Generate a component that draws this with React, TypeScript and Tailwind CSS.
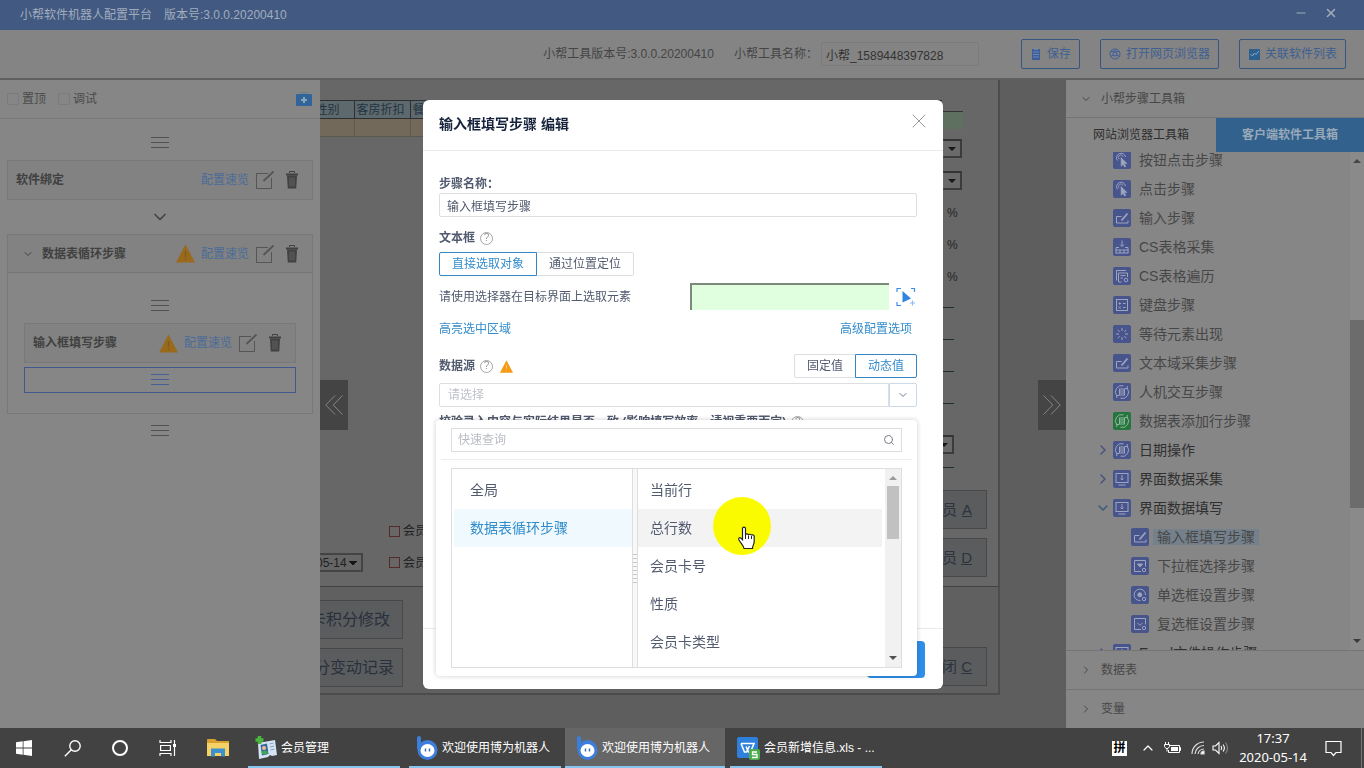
import React from "react";
import { ChevronDown, ChevronRight, ChevronUp, Minus, X, Search } from "lucide-react";

const sans = "font-['Liberation_Sans','Noto_Sans_CJK_SC',sans-serif]";

type Glyph =
  | "click" | "edit" | "collect" | "loop" | "keys" | "wait"
  | "cycle" | "screen" | "drop" | "radio" | "check";

function ToolGlyph({ kind }: { kind: Glyph }) {
  switch (kind) {
    case "click":
      return (
        <>
          <path d="M4.5 9.5A4.5 4.5 0 1 1 12.5 6M6.5 8.2A2.3 2.3 0 1 1 10 5.6" />
          <path d="M8 6.5l6 6-2.600.3 1.500 2.600-1.300.7-1.500-2.600-2 1.800z" fill="currentColor" strokeWidth="0.500" />
        </>
      );
    case "edit":
      return (
        <>
          <path d="M8.500 7.500H3.500V14H15V11.500" />
          <path d="M8.500 11.500L14.500 4.500" strokeWidth="1.800" />
        </>
      );
    case "collect":
      return <path d="M9 2.500v6M7 6.500l2 2 2-2M3 9.500h3M12 9.500h3M2.500 12h13M2.500 15h13M3 9.500V15M15 9.500V15M7 12v3M11 12v3" />;
    case "loop":
      return (
        <>
          <path d="M3.500 13.500V3.500H13M8.500 15H5.500V6H14.500V10M7.500 8.500h5M7.500 11h2.500" />
          <circle cx="13" cy="13" r="1.800" />
        </>
      );
    case "keys":
      return (
        <>
          <rect x="3.500" y="3.500" width="11" height="11" />
          <path d="M5.500 7.500h2.500M6.700 6.300v2.500M10 7.500h2.500M5.700 10.500l2 2M7.700 10.500l-2 2M10 11.500h2.500" />
        </>
      );
    case "wait":
      return <path d="M9 3v3M13.200 4.800l-1.800 2M15 9h-3M13.200 13.200l-1.800-2M9 15v-3M4.800 13.200l1.800-2M3 9h3M4.800 4.800l1.800 2" />;
    case "cycle":
      return (
        <>
          <path d="M10.500 2.800A6.300 6.300 0 0 0 4 13M7.500 15.200A6.300 6.300 0 0 0 14 5M12 5.500h2.200V3M6 12.500H3.800V15" />
          <rect x="6.500" y="6" width="5" height="6" />
          <path d="M6.500 8h5M6.500 10h5" />
        </>
      );
    case "screen":
      return (
        <>
          <rect x="3" y="3.500" width="12" height="9" />
          <path d="M9 5v5M7.500 8.500L9 10l1.500-1.500M5.500 15h7" />
        </>
      );
    case "drop":
      return (
        <>
          <path d="M10 14.500H3.500V3.500H14.500V9.500" />
          <path d="M6.500 7h5L9 10z" fill="currentColor" />
          <circle cx="13" cy="13" r="1.700" />
        </>
      );
    case "radio":
      return (
        <>
          <path d="M9.500 14.500A5.700 5.700 0 1 1 14.500 9" />
          <circle cx="8.800" cy="8.800" r="2" fill="currentColor" />
          <circle cx="13" cy="13" r="1.700" />
        </>
      );
    default:
      return (
        <>
          <path d="M10 14.500H3.500V3.500H14.500V9.500M6.500 8l2.300 2.300L11.500 8" />
          <circle cx="13" cy="13" r="1.700" />
        </>
      );
  }
}

function ToolIcon({ kind, green }: { kind: Glyph; green?: boolean }) {
  return (
    <span className={`block size-[18px] shrink-0 rounded-xs ${green ? "bg-[#24763e] text-[#93b79d]" : "bg-[#48548c] text-[#9da4bd]"}`}>
      <svg viewBox="0 0 18 18" className="size-[18px]" fill="none" stroke="currentColor" strokeWidth="1">
        <ToolGlyph kind={kind} />
      </svg>
    </span>
  );
}

function Bars({ blue }: { blue?: boolean }) {
  return (
    <svg viewBox="0 0 18 12" className={`h-3 w-[18px] ${blue ? "text-[#44619a]" : "text-[#515151]"}`} stroke="currentColor">
      <path d="M0 .5h18M0 5.500h18M0 10.500h18" />
    </svg>
  );
}

function Warning({ bright, small }: { bright?: boolean; small?: boolean }) {
  return (
    <svg viewBox="0 0 19 19" className={small ? "size-[13px]" : "size-[19px]"}>
      <path d="M9.500.5L19 18.500H0z" fill={bright ? "#f59a12" : "#99691c"} />
      <path d="M9.500 7v6M9.500 14.500v1.500" stroke={bright ? "#ffc773" : "#7d5a22"} strokeWidth="1.300" />
    </svg>
  );
}

function StepActions({ warn }: { warn?: boolean }) {
  return (
    <div className="flex items-center gap-[6px]">
      {warn && <Warning />}
      <a href="#preview" className="text-[#4b6c98]">配置速览</a>
      <button aria-label="编辑" className="text-[#555]">
        <svg viewBox="0 0 20 20" className="size-5" fill="none" stroke="currentColor">
          <path d="M13 3.500H1.500V18.500H16.500V8" />
          <path d="M8.500 11L18.500 1.500" strokeWidth="1.800" />
        </svg>
      </button>
      <button aria-label="删除" className="ml-1 text-[#414141]">
        <svg viewBox="0 0 14 20" className="h-5 w-[14px]" fill="none" stroke="currentColor">
          <path d="M4.500 3V1.500h5V3" />
          <path d="M1 3.500h12v2H1z" fill="currentColor" stroke="none" />
          <path d="M2 5.500h10l-.8 13H2.800z" fill="currentColor" stroke="none" />
          <path d="M5 7.500v9M7 7.500v9M9 7.500v9" stroke="#6d6d6d" strokeWidth="0.800" />
        </svg>
      </button>
    </div>
  );
}

function StepPanel() {
  return (
    <aside className="flex w-80 shrink-0 flex-col bg-[#868686] text-[#404040]">
      <div className="flex h-[39px] items-center border-b border-[#787878] pr-2 pl-[7px]">
        <label className="flex items-center gap-[3px] text-[#4b4b4b]">
          <input type="checkbox" className="size-3 appearance-none rounded-xs border border-[#7b7b7b]" />
          置顶
        </label>
        <label className="ml-3 flex items-center gap-[3px] text-[#4b4b4b]">
          <input type="checkbox" className="size-3 appearance-none rounded-xs border border-[#7b7b7b]" />
          调试
        </label>
        <button aria-label="工具箱" className="ml-auto">
          <svg viewBox="0 0 16 16" className="size-4">
            <path d="M5 3V1.500h6V3" fill="none" stroke="#6c7c8c" />
            <rect x="0" y="3" width="16" height="12" rx="1" fill="#31659a" />
            <path d="M8 6v6M5 9h6" stroke="#8fa3b7" strokeWidth="2" />
          </svg>
        </button>
      </div>
      <div className="flex flex-col items-center px-[7px] pt-[18px]">
        <Bars />
        <section className="mt-[11px] flex h-10 w-full items-center justify-between border border-[#787878] bg-[#828282] pr-[13px] pl-2">
          <h3 className="font-bold">软件绑定</h3>
          <StepActions />
        </section>
        <ChevronDown className="mt-[7px] size-5 text-[#444]" strokeWidth={2} />
        <section className="mt-[7px] w-full border border-[#787878]">
          <div className="flex h-[38px] items-center justify-between border-b border-[#757575] bg-[#828282] pr-[13px] pl-[14px]">
            <h3 className="flex items-center gap-2 font-bold">
              <ChevronDown className="size-3" />
              数据表循环步骤
            </h3>
            <StepActions warn />
          </div>
          <div className="flex flex-col items-center px-4 pt-[27px] pb-5">
            <Bars />
            <div className="mt-[11px] flex h-10 w-full items-center justify-between border border-[#797979] bg-[#828282] pr-[13px] pl-2">
              <h3 className="font-bold">输入框填写步骤</h3>
              <StepActions warn />
            </div>
            <div className="mt-1 flex h-[26px] w-full items-center justify-center border border-[#3f5a8a]">
              <Bars blue />
            </div>
          </div>
        </section>
        <div className="mt-[11px]">
          <Bars />
        </div>
      </div>
    </aside>
  );
}

function OldSelect() {
  return (
    <button aria-label="展开" className="flex h-[19px] w-5 items-center justify-center border-2 border-t-[#333] border-r-[#3c3c3c] border-b-[#3c3c3c] border-l-[#6e6e6e] bg-[#6a6a6a]">
      <span className="border-x-4 border-t-4 border-x-transparent border-t-[#161616]" />
    </button>
  );
}

function OldButton({ text, hotkey }: { text: string; hotkey: string }) {
  return (
    <button className="flex h-[39px] w-[45px] shrink-0 items-center justify-between overflow-hidden border border-l-0 border-[#484848] bg-[#5b5c5e] pr-[14px] text-[15px] text-[#2c3440]">
      <span>{text}</span>
      <span className="underline">{hotkey}</span>
    </button>
  );
}

function MemberApp() {
  return (
    <main className="relative flex min-w-0 flex-1 overflow-hidden bg-[#5e5e5e]">
      <div className="mr-[66px] mb-[33px] flex min-w-0 flex-1 flex-col border-r-2 border-b-2 border-[#4c4c4c] bg-[#676767]">
        <div className="flex min-h-0 flex-1">
          <div className="flex min-w-0 flex-1 flex-col pt-5">
            <table className="w-full table-fixed border-collapse text-left text-[#243344]">
              <thead>
                <tr className="h-[18px] border-y border-[#2c3034] bg-[#5d696c]">
                  <th className="w-[34px] border-r border-[#2c3034] p-0 font-normal">
                    <span className="flex justify-end overflow-hidden pr-[14px] leading-4 whitespace-nowrap">性别</span>
                  </th>
                  <th className="w-14 border-r border-[#2c3034] p-0 pl-[2px] font-normal leading-4 whitespace-nowrap">客房折扣</th>
                  <th className="p-0 pl-[2px] font-normal leading-4">餐饮折扣</th>
                </tr>
              </thead>
              <tbody>
                <tr className="h-[18px] border-b border-[#595950] bg-[#72695a]">
                  <td className="border-r border-[#5f5a50] p-0" />
                  <td className="border-r border-[#5f5a50] p-0" />
                  <td className="p-0" />
                </tr>
              </tbody>
            </table>
            <div className="mt-auto grid w-[180px] grid-cols-[69px_1fr] items-center gap-y-[14px] pb-[14px] text-[#202020]">
              <span />
              <label className="flex items-center gap-[3px]">
                <input type="checkbox" className="size-[11px] appearance-none border border-[#552a2a]" />
                会员
              </label>
              <select aria-label="日期" className="h-[19px] w-[43px] appearance-none border-2 border-l-0 border-[#444] bg-[#666] bg-[linear-gradient(45deg,transparent_50%,#161616_50%),linear-gradient(-45deg,transparent_50%,#161616_50%)] bg-[length:4px_4px] bg-[position:right_8px_center,right_4px_center] bg-no-repeat -indent-1 leading-none">
                <option>05-14</option>
              </select>
              <label className="flex items-center gap-[3px]">
                <input type="checkbox" className="size-[11px] appearance-none border border-[#552a2a]" />
                会员
              </label>
            </div>
          </div>
          <div className="flex w-14 flex-col pt-[31px]">
            <div className="h-[18px] w-[21px] border-t border-[#333] bg-[#5e7060]" />
            <div className="mt-[10px] flex flex-col gap-[13px]">
              <OldSelect />
              <OldSelect />
            </div>
            <div className="mt-[15px] flex flex-col gap-4 pl-[5px] leading-4 text-[#262626]">
              <span>%</span>
              <span>%</span>
              <span>%</span>
            </div>
            <div className="mt-[22px] flex w-3 flex-col gap-[31px]">
              <span className="h-px bg-[#1f3322]" />
              <span className="h-px bg-[#1f3322]" />
              <span className="h-px bg-[#1f3322]" />
              <span className="h-px bg-[#1f3322]" />
            </div>
            <div className="-ml-2 mt-[31px]">
              <OldSelect />
            </div>
            <span className="mt-[13px] h-px w-3 bg-[#1f3322]" />
            <div className="mt-auto mb-[9px] flex flex-col gap-[9px]">
              <OldButton text="员" hotkey="A" />
              <OldButton text="员" hotkey="D" />
            </div>
          </div>
        </div>
        <div className="flex h-[107px] shrink-0 justify-between border-t border-[#444] bg-[#606060] pt-[13px]">
          <div className="flex w-[83px] flex-col gap-[9px] text-base text-[#29313c]">
            <button className="flex h-[39px] shrink-0 items-center justify-end overflow-hidden border border-l-0 border-[#484848] bg-[#5b5c5e] pr-3 whitespace-nowrap">卡积分修改</button>
            <button className="flex h-[39px] shrink-0 items-center justify-end overflow-hidden border border-l-0 border-[#484848] bg-[#5b5c5e] pr-2 whitespace-nowrap">分变动记录</button>
          </div>
          <div className="flex w-14 flex-col justify-end pb-[7px]">
            <OldButton text="闭" hotkey="C" />
          </div>
        </div>
      </div>
      <button aria-label="收起左侧" className="absolute top-[300px] left-0 flex h-[50px] w-7 items-center justify-center bg-[#444] text-[#858585]">
        <svg viewBox="0 0 18 20" className="h-5 w-[18px]" fill="none" stroke="currentColor">
          <path d="M10 .5L.8 10 10 19.500M17.500.5L8.300 10l9.200 9.500" />
        </svg>
      </button>
      <button aria-label="收起右侧" className="absolute top-[300px] right-0 flex h-[50px] w-7 items-center justify-center bg-[#444] text-[#858585]">
        <svg viewBox="0 0 18 20" className="h-5 w-[18px]" fill="none" stroke="currentColor">
          <path d="M8 .5L17.200 10 8 19.500M.5.5L9.700 10 .5 19.500" />
        </svg>
      </button>
    </main>
  );
}

type Row = { text: string; icon: Glyph; green?: boolean; level?: "group" | "open" | "child"; active?: boolean };

const rows: Row[] = [
  { text: "按钮点击步骤", icon: "click" },
  { text: "点击步骤", icon: "click" },
  { text: "输入步骤", icon: "edit" },
  { text: "CS表格采集", icon: "collect" },
  { text: "CS表格遍历", icon: "loop" },
  { text: "键盘步骤", icon: "keys" },
  { text: "等待元素出现", icon: "wait" },
  { text: "文本域采集步骤", icon: "edit" },
  { text: "人机交互步骤", icon: "cycle" },
  { text: "数据表添加行步骤", icon: "cycle", green: true },
  { text: "日期操作", icon: "cycle", level: "group" },
  { text: "界面数据采集", icon: "screen", level: "group" },
  { text: "界面数据填写", icon: "screen", level: "open" },
  { text: "输入框填写步骤", icon: "edit", level: "child", active: true },
  { text: "下拉框选择步骤", icon: "drop", level: "child" },
  { text: "单选框设置步骤", icon: "radio", level: "child" },
  { text: "复选框设置步骤", icon: "check", level: "child" },
  { text: "Excel文件操作步骤", icon: "screen", level: "group" },
];

function ToolPanel() {
  return (
    <aside className="flex w-[298px] shrink-0 flex-col bg-[#868686] text-[#474747]">
      <button className="flex h-[38px] shrink-0 items-center gap-[9px] border-b border-[#757575] pl-[14px]">
        <ChevronDown className="size-3" />
        小帮步骤工具箱
      </button>
      <div className="grid h-[34px] shrink-0 grid-cols-[150px_1fr]">
        <button className="text-[#2e2e2e]">网站浏览器工具箱</button>
        <button className="bg-[#31618c] font-bold text-[#98a9ba]">客户端软件工具箱</button>
      </div>
      <div className="flex h-0 min-h-0 flex-1 overflow-hidden">
        <ul className="-mt-[7px] min-w-0 flex-1 text-sm">
          {rows.map((r) => (
            <li key={r.text} className={`flex h-[29px] items-center ${r.level === "child" ? "pl-[65px]" : r.level ? "pl-[29px] text-[#303030]" : "pl-[47px]"}`}>
              {r.level === "group" && <ChevronRight className="mr-[2px] size-4 text-[#455080]" />}
              {r.level === "open" && <ChevronDown className="mr-[2px] size-4 text-[#37567a]" />}
              <ToolIcon kind={r.icon} green={r.green} />
              <span className={`ml-1 px-1 leading-4 ${r.active ? "bg-[#74808b]" : ""}`}>{r.text}</span>
            </li>
          ))}
        </ul>
        <div className="flex w-[14px] flex-col items-center justify-between bg-[#8a8a8a] py-[7px]">
          <span className="border-x-4 border-b-4 border-x-transparent border-b-[#454545]" />
          <span className="mt-[157px] mb-auto h-[188px] w-full bg-[#6c6c6c]" />
          <span className="border-x-4 border-t-4 border-x-transparent border-t-[#3a3a3a]" />
        </div>
      </div>
      <button className="flex h-[39px] shrink-0 items-center gap-[9px] border-t border-[#757575] pl-[14px]">
        <ChevronRight className="size-3" />
        数据表
      </button>
      <button className="flex h-[39px] shrink-0 items-center gap-[9px] border-t border-[#757575] pl-[14px]">
        <ChevronRight className="size-3" />
        变量
      </button>
    </aside>
  );
}

function Help() {
  return (
    <span className="flex size-[13px] items-center justify-center rounded-full border border-[#a5a5a8] text-[10px] leading-none font-normal text-[#98989c]">?</span>
  );
}

function VariablePicker() {
  return (
    <div className="absolute top-full -left-[3px] z-10 mt-[13px] w-[481px] rounded-sm bg-white pb-2 text-[#515a6e] shadow-[0_0_5px_rgba(0,0,0,0.2)]">
      <div className="mx-[5px] border-b border-[#ececef] px-[10px] pt-2 pb-[7px]">
        <label className="flex h-6 items-center border border-[#dcdee2] px-[6px]">
          <input placeholder="快速查询" aria-label="快速查询" className="min-w-0 flex-1 outline-none placeholder:text-[#b9bcc3]" />
          <Search className="size-3 text-[#777c88]" />
        </label>
      </div>
      <div className="mx-[15px] mt-2 flex h-[200px] border border-[#dcdee2] text-sm">
        <ul className="w-[180px] py-[2px]">
          <li className="ml-[2px] flex h-[38px] items-center pl-4">全局</li>
          <li className="ml-[2px] flex h-[38px] items-center bg-[#f0fafe] pl-4 text-[#338ccb]">数据表循环步骤</li>
        </ul>
        <div className="flex w-[6px] flex-col items-center justify-center gap-[3px] border-x border-[#dcdee2] bg-[#f8f8f9]">
          {[0, 1, 2, 3, 4, 5, 6, 7].map((n) => (
            <span key={n} className="h-px w-full bg-[#c4c7cc]" />
          ))}
        </div>
        <ul className="min-w-0 flex-1 overflow-hidden py-[2px] pr-[3px]">
          {["当前行", "总行数", "会员卡号", "性质", "会员卡类型"].map((t) => (
            <li key={t} className={`flex h-[38px] items-center pl-3 ${t === "总行数" ? "bg-[#f3f3f3]" : ""}`}>{t}</li>
          ))}
        </ul>
        <div className="flex w-4 flex-col items-center bg-[#f1f1f1] py-[7px]">
          <span className="border-x-4 border-b-4 border-x-transparent border-b-[#9b9b9b]" />
          <span className="mt-[6px] h-[53px] w-3 bg-[#c1c1c1]" />
          <span className="mt-auto border-x-4 border-t-4 border-x-transparent border-t-[#505050]" />
        </div>
      </div>
    </div>
  );
}

function EditDialog() {
  return (
    <div className="pointer-events-none fixed inset-0 flex items-start justify-center pt-[100px] pl-[2px]">
      <div role="dialog" aria-label="输入框填写步骤 编辑" className="pointer-events-auto w-[520px] rounded-md bg-white text-[#515a6e]">
        <header className="flex h-[51px] items-center justify-between border-b border-[#e8eaec] pr-3 pb-[2px] pl-4">
          <h2 className="text-sm font-bold text-[#17233d]">输入框填写步骤 编辑</h2>
          <button aria-label="关闭" className="pb-[7px] text-[#999]">
            <X className="size-6" strokeWidth={1} />
          </button>
        </header>
        <div className="min-h-[477px] pt-6 pr-[26px] pl-4 leading-[18px]">
          <label htmlFor="step-name" className="block font-bold">步骤名称：</label>
          <input id="step-name" defaultValue="输入框填写步骤" className="block h-6 w-full rounded-xs border border-[#dcdee2] px-[7px]" />
          <div className="mt-3 flex items-center gap-[5px] font-bold">文本框 <Help /></div>
          <div className="mt-[5px] flex h-6">
            <button className="rounded-l-xs border border-[#3585c2] px-[12px] text-[#338ccb]">直接选取对象</button>
            <button className="rounded-r-xs border border-l-0 border-[#dcdee2] px-3">通过位置定位</button>
          </div>
          <div className="mt-[7px] flex h-[27px] items-center">
            <label htmlFor="target" className="flex-1">请使用选择器在目标界面上选取元素</label>
            <input id="target" className="h-[27px] w-[199px] border-t-2 border-l-2 border-t-[#7c8a7c] border-l-[#7c8a7c] bg-[#dfffdf]" />
            <button aria-label="选取元素" className="ml-[7px] w-[21px]">
              <svg viewBox="0 0 20 20" className="size-5" fill="none" stroke="#3a8fe8" strokeWidth="1.200">
                <path d="M1 5V1.500H5M15 1.500H18.500V5M1 15V18.500H5" />
                <path d="M6.500 4L15 11.500 6.500 15.500z" fill="#2f86e0" stroke="none" />
                <path d="M14 16h5M16.500 13.500v5" stroke="#8dbdf0" />
              </svg>
            </button>
          </div>
          <div className="mt-[10px] flex justify-between pr-[5px] text-[#338ccb]">
            <a href="#highlight">高亮选中区域</a>
            <a href="#advanced">高级配置选项</a>
          </div>
          <div className="mt-4 flex h-6 items-center">
            <span className="flex flex-1 items-center gap-[5px] font-bold">数据源 <Help /><span className="ml-[2px]"><Warning bright small /></span></span>
            <button className="h-6 rounded-l-xs border border-r-0 border-[#dcdee2] px-3">固定值</button>
            <button className="h-6 rounded-r-xs border border-[#3585c2] px-3 text-[#338ccb]">动态值</button>
          </div>
          <div className="relative mt-[5px] flex">
            <input placeholder="请选择" aria-label="数据源" className="h-6 min-w-0 flex-1 rounded-l-xs border border-[#dcdee2] px-2 placeholder:text-[#bfc2c9]" />
            <button aria-label="展开" className="flex h-6 w-7 items-center justify-center rounded-r-xs border border-[#ccd9e8]">
              <ChevronDown className="size-3 text-[#6a7a94]" />
            </button>
            <VariablePicker />
          </div>
          <div className="mt-[6px] flex items-center gap-[5px] font-bold">校验录入内容与实际结果是否一致 (影响填写效率，请视重要而定) <Help /></div>
        </div>
        <footer className="flex h-[61px] items-start justify-end border-t border-[#e8eaec] pt-3 pr-[18px]">
          <button className="h-[37px] w-[58px] rounded-sm bg-[#2f8ee8] text-sm text-white">确定</button>
        </footer>
      </div>
    </div>
  );
}

function Pointer() {
  return (
    <svg viewBox="0 0 58 58" className="pointer-events-none fixed top-[497px] left-1/2 ml-[31px] size-[58px]">
      <circle cx="29" cy="29" r="29" fill="#fbfb00" />
      <path d="M29.500 31.500c0-1.800 3-1.800 3 0v6.500c0-1.500 3-1.500 3 .2c0-1.400 3-1.200 3 .4c0-1.200 2.700-1 2.700.7v5.200c0 3-1.700 3.800-1.700 7h-8.500c-.5-3-3-5-5-8.500c-1-2 .6-3 2-1.800l1.500 1.500z" fill="#fff" stroke="#222" strokeWidth="1.200" />
      <path d="M32.500 38v4M35.500 38.500V42M38.500 39v3" stroke="#222" />
    </svg>
  );
}

function BotIcon() {
  return (
    <svg viewBox="0 0 22 26" className="h-[26px] w-[22px] shrink-0">
      <path d="M3 3v10" stroke="#3d7ddb" strokeWidth="4" strokeLinecap="round" />
      <circle cx="11.500" cy="15" r="10" fill="#3d7ddb" />
      <ellipse cx="11.500" cy="15.500" rx="7" ry="6.500" fill="#fff" />
      <path d="M9.500 13.500v3M13.500 13.500v3" stroke="#3d6db5" strokeWidth="1.500" />
    </svg>
  );
}

function MemberIcon() {
  return (
    <svg viewBox="0 0 22 24" className="h-6 w-[22px] shrink-0">
      <path d="M3 7l17-3 2 15-5 1-2-1-2 2-9 2z" fill="#d5e3f3" />
      <path d="M5.500 9l6.500-1.500 1.500 10.500-6.500 1.500z" fill="#34699c" />
      <circle cx="9" cy="12" r="2" fill="#f0c090" />
      <path d="M6.800 18.500q0-4 2.800-4t3.600 3z" fill="#3eaa50" />
      <path d="M14.500 8l4-1M15 11l4-1M15.500 14l4-1" stroke="#7d9fc0" />
      <path d="M4.500 0v8M.5 4h8" stroke="#49b83c" strokeWidth="3.500" />
    </svg>
  );
}

function WpsIcon() {
  return (
    <svg viewBox="0 0 23 23" className="size-[23px] shrink-0">
      <rect width="21" height="21" rx="2" fill="#2f7fdc" />
      <path d="M4 6.500h13l-3.500 8.500h-2L9 9.500M4 6.500l3.500 8.500h2l3-6" fill="none" stroke="#fff" strokeWidth="1.600" />
      <rect x="12" y="12" width="11" height="11" rx="2" fill="#4cad4e" />
      <path d="M20 15h-4.500v2.500H20V20.500h-5" fill="none" stroke="#fff" strokeWidth="1.300" />
    </svg>
  );
}

function Task({ icon, text, active, className = "" }: { icon: React.ReactNode; text: string; active?: boolean; className?: string }) {
  return (
    <button className={`flex h-full items-center gap-1 border-b-2 border-[#86c5ef] pt-[2px] whitespace-nowrap ${active ? "w-40 bg-[#666] pl-[11px]" : "w-[152px] pl-[7px]"} ${className}`}>
      {icon}
      {text}
    </button>
  );
}

function Taskbar() {
  return (
    <nav className="flex h-10 shrink-0 items-center bg-[#424242] text-white">
      <button aria-label="开始" className="flex w-12 justify-center">
        <svg viewBox="0 0 16 16" className="size-4" fill="#fff">
          <path d="M0 2.300L6.700 1.300V7.600H0zM7.500 1.200L16 0v7.600H7.500zM0 8.400h6.700v6.300L0 13.700zM7.500 8.400H16V16l-8.500-1.200z" />
        </svg>
      </button>
      <button aria-label="搜索" className="flex w-12 justify-center">
        <svg viewBox="0 0 17 17" className="size-[17px]" fill="none" stroke="#fff" strokeWidth="1.400">
          <circle cx="11" cy="6" r="5.200" />
          <path d="M7.300 9.700L.8 16.200" />
        </svg>
      </button>
      <button aria-label="Cortana" className="flex w-12 justify-center">
        <span className="size-4 rounded-full border-2 border-white" />
      </button>
      <button aria-label="任务视图" className="flex w-12 justify-center">
        <svg viewBox="0 0 18 16" className="h-4 w-[18px]" fill="none" stroke="#fff" strokeWidth="1.200">
          <path d="M1 0v2.500h11V0M1 16v-2.500h11V16M1.600 5.500h9.800v5H1.600zM15.500 0v16" />
          <path d="M14 4h3v3h-3z" fill="#fff" stroke="none" />
        </svg>
      </button>
      <button aria-label="文件资源管理器" className="flex w-[52px] justify-center">
        <svg viewBox="0 0 22 18" className="h-[18px] w-[22px]">
          <path d="M0 1q0-1 1-1h7l2 2h12v5H0z" fill="#d9a12f" />
          <path d="M0 4h22v13H0z" fill="#f5d268" />
          <path d="M4 17.500V9.500h14v8h-4V14H8v3.500z" fill="#3b91cd" />
        </svg>
      </button>
      <Task icon={<MemberIcon />} text="会员管理" className="ml-1" />
      <Task icon={<BotIcon />} text="欢迎使用博为机器人" className="ml-[9px]" />
      <Task icon={<BotIcon />} text="欢迎使用博为机器人" active className="ml-1" />
      <Task icon={<WpsIcon />} text="会员新增信息.xls - ..." className="ml-[5px]" />
      <div className="mr-[2px] ml-auto flex h-full items-center border-r border-[#777] pr-[19px]">
        <span className="flex size-[15px] items-center justify-center bg-white text-xs leading-none font-bold text-black">拼</span>
        <ChevronUp className="ml-[13px] size-4" strokeWidth={1.8} />
        <svg viewBox="0 0 17 14" className="ml-2 h-[14px] w-[17px]" fill="none" stroke="#fff">
          <path d="M6 4.500h9.500v7H4.500V9M15.500 6.500h1v3h-1M1.500 1v2M4.500 1v2M.5 3.500h5v2l-1.500 2H2L.5 5.500zM3 7.500v3" />
          <path d="M7 6h7v4H7z" fill="#fff" stroke="none" />
        </svg>
        <svg viewBox="0 0 14 14" className="ml-[10px] size-[14px]" fill="none" stroke="#ddd" strokeWidth="1.200">
          <path d="M1 13A12 12 0 0 1 13 1M4 13A9 9 0 0 1 13 4.500M7 13A6 6 0 0 1 13 8" />
          <path d="M10 13a3 3 0 0 1 3-3v3z" fill="#fff" />
        </svg>
        <svg viewBox="0 0 17 14" className="ml-[7px] h-[14px] w-[17px]" fill="none" stroke="#fff" strokeWidth="1.100">
          <path d="M1 5v4h2.500L7 12.500v-11L3.500 5zM9 5q1.500 2 0 4M11 3.500q2.800 3.500 0 7" />
          <path d="M13.500 1.500q4 5.500 0 11" stroke="#888" />
        </svg>
        <time className="ml-[10px] text-center font-['Noto_Sans','Noto_Sans_CJK_SC',sans-serif] text-[13px] leading-[19px]">
          17:37
          <br />
          2020-05-14
        </time>
        <button aria-label="通知" className="ml-[18px]">
          <svg viewBox="0 0 17 17" className="size-[17px]" fill="none" stroke="#fff" strokeWidth="1.200">
            <path d="M1 1.500h15v11h-5L8.500 15.500 6 12.500H1z" />
          </svg>
        </button>
      </div>
    </nav>
  );
}

const toolButton = "flex h-[30px] items-center gap-[5px] rounded-xs border border-[#34567f] px-2 text-[#3f5f90] whitespace-nowrap";

export default function App() {
  return (
    <div className={`flex h-screen flex-col overflow-hidden bg-[#5f5f5f] text-xs ${sans}`}>
      <header className="flex h-[30px] shrink-0 items-center bg-[#425a82] pr-[26px] pl-5 text-[#a1acbd]">
        <span>小帮软件机器人配置平台</span>
        <span className="ml-3">版本号:3.0.0.20200410</span>
        <button aria-label="最小化" className="mb-1 ml-auto"><Minus className="size-[14px]" /></button>
        <button aria-label="关闭窗口" className="mb-1 ml-4"><X className="size-[14px]" strokeWidth={2.5} /></button>
      </header>
      <div className="mb-[2px] flex h-12 shrink-0 items-center justify-end bg-[#848484] pr-[18px] text-[#444]">
        <span>小帮工具版本号:3.0.0.20200410</span>
        <label htmlFor="tool-name" className="ml-5">小帮工具名称：</label>
        <input id="tool-name" defaultValue="小帮_1589448397828" className="ml-[3px] h-6 w-[158px] rounded-xs border border-[#7c7c7c] px-1 text-[#333]" />
        <button className={`${toolButton} ml-[42px]`}>
          <svg viewBox="0 0 12 12" className="size-3"><path d="M2 1h8v11H2z" fill="#3e5e9b" /><path d="M3 4h6M3 6.500h6M3 9h6M4 1.500h4" stroke="#8496b5" strokeWidth="0.700" /></svg>
          保存
        </button>
        <button className={`${toolButton} ml-5`}>
          <svg viewBox="0 0 12 12" className="size-3" fill="none" stroke="#3e5e9b"><circle cx="6" cy="6" r="5" /><circle cx="6" cy="6" r="2" /><path d="M6 1v3M1.500 8.500l3-1.500M10.500 8.500l-3-1.500M2 3.500h3M7 3.500h3" /></svg>
          打开网页浏览器
        </button>
        <button className={`${toolButton} ml-5`}>
          <svg viewBox="0 0 12 12" className="size-3"><path d="M1 1h11v11H1z" fill="#2b6090" /><path d="M2.500 6l2 2 2-3 1.500 1.500 3-3.500" fill="none" stroke="#8ca5bd" /></svg>
          关联软件列表
        </button>
      </div>
      <div className="flex min-h-0 flex-1">
        <StepPanel />
        <MemberApp />
        <ToolPanel />
      </div>
      <Taskbar />
      <EditDialog />
      <Pointer />
    </div>
  );
}
